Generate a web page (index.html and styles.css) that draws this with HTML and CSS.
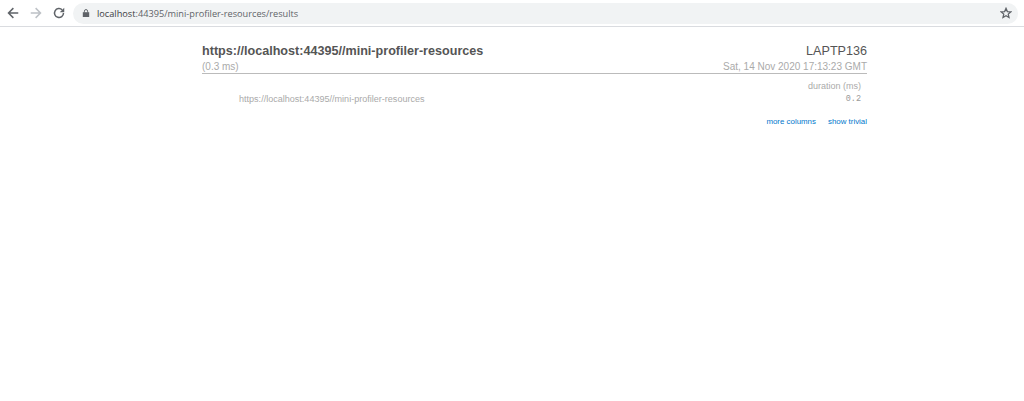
FILE: index.html
```html
<!DOCTYPE html>
<html lang="en">
<head>
    <meta charset="UTF-8">
    <title>Profiler Results</title>
    <link rel="stylesheet" href="styles.css">
</head>
<body>
    <div class="toolbar">
        <svg class="nav-icon" width="12" height="12" viewBox="0 0 16 16"><path d="M15 8H2M8.5 1.5L2 8l6.500 6.500" fill="none" stroke="#5f6368" stroke-width="2"/></svg>
        <svg class="nav-icon" width="12" height="12" viewBox="0 0 16 16"><path d="M1 8h13M7.500 1.500L14 8l-6.500 6.500" fill="none" stroke="#bdc1c6" stroke-width="2"/></svg>
        <svg class="nav-icon" width="12" height="12" viewBox="0 0 16 16"><path d="M14 8a6 6 0 1 1-1.800-4.300" fill="none" stroke="#5f6368" stroke-width="2"/><path d="M15 1v6H9z" fill="#5f6368"/></svg>
        <div class="omnibox">
            <svg class="lock" width="8" height="10" viewBox="0 0 10 11"><path d="M1 4.500h8v6H1z" fill="#5f6368"/><path d="M3 5V3.200a2 2 0 0 1 4 0V5" fill="none" stroke="#5f6368" stroke-width="1.200"/></svg>
            <span class="url"><span class="host">localhost</span>:44395/mini-profiler-resources/results</span>
            <svg class="star" width="12" height="12" viewBox="0 0 14 14"><path d="M7 1.600l1.600 3.700 4 .35-3 2.650.9 3.900L7 10.100l-3.500 2.100.9-3.900-3-2.650 4-.35z" fill="none" stroke="#5f6368" stroke-width="1.500"/></svg>
        </div>
    </div>

    <div class="results">
        <div class="header">
            <div>
                <h1>https://localhost:44395//mini-profiler-resources</h1>
                <div class="sub">(0.3 ms)</div>
            </div>
            <div class="right">
                <div class="machine">LAPTP136</div>
                <div class="sub">Sat, 14 Nov 2020 17:13:23 GMT</div>
            </div>
        </div>
        <div class="col-head">duration (ms)</div>
        <div class="timing">
            <span class="timing-name">https://localhost:44395//mini-profiler-resources</span>
            <code class="timing-val">0.2</code>
        </div>
        <div class="links">
            <a href="#">more columns</a>
            <a href="#">show trivial</a>
        </div>
    </div>
</body>
</html>
```

FILE: styles.css
```css
body {
    margin: 0;
    background-color: #fff;
    font-family: "Liberation Sans", Arial, sans-serif;
    color: #555;
}
.toolbar {
    display: flex;
    align-items: center;
    height: 27px;
    padding: 0 6px 0 7px;
    box-sizing: border-box;
    border-bottom: 1px solid #dadce0;
}
.nav-icon {
    margin-right: 11px;
}
.omnibox {
    display: flex;
    align-items: center;
    flex: 1;
    height: 21px;
    margin-left: -3px;
    padding: 0 6px 0 9px;
    background-color: #f1f3f4;
    border-radius: 11px;
}
.lock {
    margin-right: 7px;
}
.url {
    flex: 1;
    font-family: "Open Sans", sans-serif;
    font-size: 9.2px;
    color: #5f6368;
}
.host {
    color: #3c4043;
}
.results {
    width: 665px;
    margin: 16px 0 0 202px;
}
.header {
    display: flex;
    justify-content: space-between;
    border-bottom: 1px solid #bbb;
}
h1 {
    margin: 0;
    font-size: 12.6px;
    line-height: 16px;
    font-weight: bold;
    color: #555;
}
.sub {
    margin-top: 1px;
    font-size: 10px;
    line-height: 13px;
    color: #aaa;
}
.right {
    text-align: right;
}
.machine {
    font-size: 12.6px;
    line-height: 16px;
    color: #555;
}
.col-head {
    margin-top: 6px;
    padding-right: 6px;
    text-align: right;
    font-size: 9px;
    line-height: 12px;
    color: #aaa;
}
.timing {
    display: flex;
    justify-content: space-between;
    align-items: center;
    margin-top: 1px;
    padding: 0 6px 0 37px;
    line-height: 12px;
}
.timing-name {
    font-size: 9.05px;
    color: #aaa;
}
.timing-val {
    font-family: "Liberation Mono", monospace;
    font-size: 8.5px;
    color: #999;
}
.links {
    display: flex;
    justify-content: flex-end;
    gap: 12px;
    margin-top: 11px;
    font-size: 7.9px;
    line-height: 11px;
}
.links a {
    color: #0077cc;
    text-decoration: none;
}
```
